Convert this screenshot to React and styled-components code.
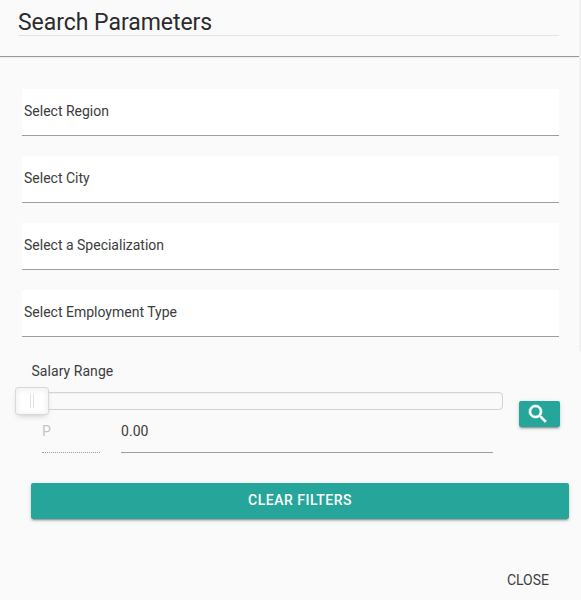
import React from 'react';
import styled, { createGlobalStyle } from 'styled-components';

const GlobalStyle = createGlobalStyle`
  *, *::before, *::after { box-sizing: border-box; }
  body {
    margin: 0;
    background: #fafafa;
    color: #3c3c3c;
    font-family: Roboto, sans-serif;
    font-size: 14px;
    font-weight: 400;
    line-height: 20px;
    overflow: hidden;
  }
`;

const raised = `
  box-shadow: 0 2px 2px 0 rgba(0, 0, 0, 0.14), 0 1px 5px 0 rgba(0, 0, 0, 0.12),
    0 3px 1px -2px rgba(0, 0, 0, 0.2);
`;

const Modal = styled.main`
  display: flex;
  align-items: flex-start;
  width: 581px;
  height: 600px;
`;

const Content = styled.div`
  display: flex;
  flex-direction: column;
  width: 579px;
  height: 600px;
`;

const ScrollTrack = styled.div`
  width: 2px;
  height: 351px;
  background: #f1f1f1;
`;

const Title = styled.h1`
  margin: 0 20px 0 18px;
  height: 36px;
  padding-top: 9px;
  border-bottom: 1px solid #e4e4e4;
  color: #2c2c2c;
  font-size: 23px;
  line-height: 28px;
  font-weight: 400;
  letter-spacing: -0.04px;
`;

const Divider = styled.div`
  height: 2px;
  margin-top: 20px;
  border-top: 1px solid #9a9a9a;
  border-bottom: 1px solid #eeeeee;
`;

const Filters = styled.div`
  display: flex;
  flex-direction: column;
  gap: 20px;
  margin: 31px 20px 0 22px;
`;

const SelectField = styled.div`
  height: 47px;
  padding: 12px 2px 0;
  background: #fff;
  border-bottom: 1px solid #9e9e9e;
`;

const SalaryRow = styled.section`
  display: flex;
  gap: 16px;
  height: 92px;
  margin: 24px 19px 0 31px;
`;

const Salary = styled.div`
  width: 472px;
`;

const SalaryLabel = styled.div`
  height: 31px;
  padding-left: 0.5px;
  letter-spacing: 0.05px;
`;

const SliderTrack = styled.div`
  position: relative;
  height: 18px;
  border: 1px solid #d3d3d3;
  border-radius: 4px;
  background: #fafafa;
  box-shadow: inset 0 1px 1px #f0f0f0;
`;

const SliderHandle = styled.div`
  position: absolute;
  left: -17px;
  top: -6px;
  display: flex;
  gap: 2px;
  width: 34px;
  height: 28px;
  padding: 6px 0 0 14px;
  border: 1px solid #d9d9d9;
  border-radius: 3px;
  background: #fff;
  box-shadow: inset 0 0 1px #fff, inset 0 1px 7px #ebebeb, 0 3px 6px -3px #bbb;
`;

const Grip = styled.span`
  width: 1px;
  height: 14px;
  background: #e4e3e2;
`;

const Amount = styled.div`
  display: flex;
  gap: 21px;
  padding: 11px 10px 0 11px;
`;

const AmountCell = styled.div`
  width: ${(p) => p.$width}px;
  height: 32px;
  color: ${(p) => (p.$muted ? '#c4c4c4' : 'inherit')};
  border-bottom: 1px ${(p) => (p.$muted ? 'dotted' : 'solid')} #9e9e9e;
  letter-spacing: 0.05px;
`;

const SearchButton = styled.button`
  display: flex;
  width: 41px;
  height: 26px;
  margin-top: 40px;
  padding: 1px 0 0 7px;
  border: 0;
  border-radius: 2px;
  background: #26a69a;
  ${raised}
`;

const ClearButton = styled.button`
  height: 36px;
  margin: 30px 10px 0 31px;
  padding: 0 0 2px;
  border: 0;
  border-radius: 2px;
  background: #26a69a;
  color: #fff;
  font: 500 14px/20px Roboto, sans-serif;
  letter-spacing: 0.5px;
  ${raised}
`;

const Footer = styled.footer`
  display: flex;
  justify-content: flex-end;
  padding: 51px 30px 0 0;
`;

const CloseButton = styled.button`
  padding: 0;
  border: 0;
  background: none;
  color: #3f3f3f;
  font: 400 14px/20px Roboto, sans-serif;
`;

const filters = [
  'Select Region',
  'Select City',
  'Select a Specialization',
  'Select Employment Type',
];

function SearchIcon() {
  return (
    <svg width="24" height="24" viewBox="0 0 24 24" fill="#fff" stroke="#fff" strokeWidth="0.6" aria-hidden="true">
      <path d="M15.5 14h-.79l-.28-.27C15.41 12.59 16 11.11 16 9.5 16 5.91 13.09 3 9.5 3S3 5.91 3 9.5 5.91 16 9.5 16c1.61 0 3.09-.59 4.23-1.57l.27.28v.79l5 4.99L20.49 19l-4.99-5zm-6 0C7.01 14 5 11.99 5 9.5S7.01 5 9.5 5 14 7.01 14 9.5 11.99 14 9.5 14z" />
    </svg>
  );
}

export default function App() {
  return (
    <>
      <GlobalStyle />
      <Modal>
        <Content>
          <Title>Search Parameters</Title>
          <Divider />
          <Filters>
            {filters.map((label) => (
              <SelectField key={label}>{label}</SelectField>
            ))}
          </Filters>
          <SalaryRow>
            <Salary>
              <SalaryLabel>Salary Range</SalaryLabel>
              <SliderTrack>
                <SliderHandle>
                  <Grip />
                  <Grip />
                </SliderHandle>
              </SliderTrack>
              <Amount>
                <AmountCell $width={58} $muted>P</AmountCell>
                <AmountCell $width={372}>0.00</AmountCell>
              </Amount>
            </Salary>
            <SearchButton aria-label="Search">
              <SearchIcon />
            </SearchButton>
          </SalaryRow>
          <ClearButton>CLEAR FILTERS</ClearButton>
          <Footer>
            <CloseButton>CLOSE</CloseButton>
          </Footer>
        </Content>
        <ScrollTrack />
      </Modal>
    </>
  );
}
